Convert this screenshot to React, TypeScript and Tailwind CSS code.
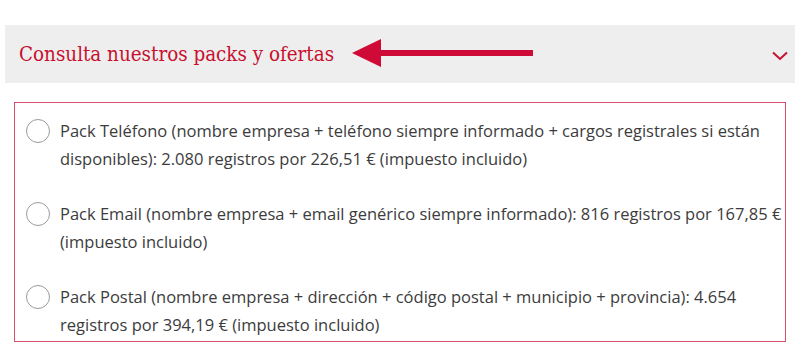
const packs = [
  "Pack Teléfono (nombre empresa + teléfono siempre informado + cargos registrales si están disponibles): 2.080 registros por 226,51 € (impuesto incluido)",
  "Pack Email (nombre empresa + email genérico siempre informado): 816 registros por 167,85 € (impuesto incluido)",
  "Pack Postal (nombre empresa + dirección + código postal + municipio + provincia): 4.654 registros por 394,19 € (impuesto incluido)",
];

export default function App() {
  return (
    <div className="w-[800px] h-[360px] bg-white pt-[25px] px-[5px] overflow-hidden">
      {/* Accordion header */}
      <div className="h-[58px] bg-[#eeeeee] flex items-center pl-[14px] pr-[7px]">
        <span className="text-[#c8102e] text-[20.4px] font-['DejaVu_Serif_Condensed','DejaVu_Serif',serif] [font-stretch:condensed] leading-none">
          Consulta nuestros packs y ofertas
        </span>
        <svg width="182" height="28" viewBox="0 0 182 28" className="ml-[18px] mt-[-2px]">
          <polygon points="0,14 29,0 29,28" fill="#cf0a36" />
          <rect x="27" y="11" width="154" height="6" fill="#cf0a36" />
        </svg>
        <svg width="16" height="10" viewBox="0 0 16 10" className="ml-auto mt-[4px]">
          <polyline points="1,1.5 8,8 15,1.5" fill="none" stroke="#c8102e" strokeWidth="2" />
        </svg>
      </div>

      {/* Options box */}
      <div className="mt-[19px] mx-[9px] h-[240px] border border-[#d9506e] pt-[14px] pb-[1px] pl-[11px] pr-0 flex flex-col gap-[27px] font-['Open_Sans',sans-serif] text-[16.5px] leading-[28px] text-[#3c3c3c]">
        {packs.map((text, i) => (
          <label key={i} className="flex items-start gap-[10px]">
            <span className="mt-[2px] w-[24px] h-[24px] rounded-full border border-[#9a9a9a] bg-white shrink-0" />
            <span>{text}</span>
          </label>
        ))}
      </div>
    </div>
  );
}
